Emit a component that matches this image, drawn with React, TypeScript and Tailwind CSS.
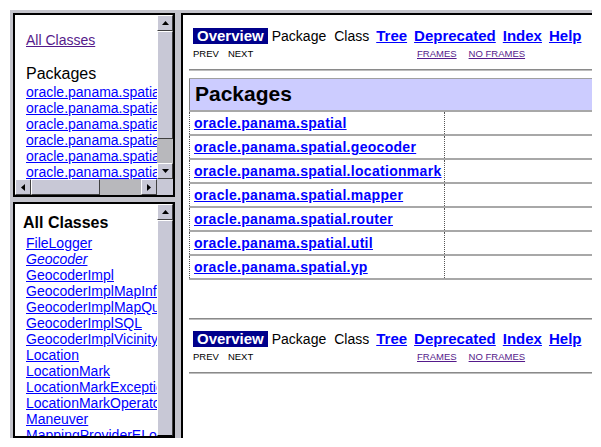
import React from "react";

const packages = [
  "oracle.panama.spatial",
  "oracle.panama.spatial.geocoder",
  "oracle.panama.spatial.locationmark",
  "oracle.panama.spatial.mapper",
  "oracle.panama.spatial.router",
  "oracle.panama.spatial.util",
  "oracle.panama.spatial.yp",
];

const classes: { name: string; italic?: boolean }[] = [
  { name: "FileLogger" },
  { name: "Geocoder", italic: true },
  { name: "GeocoderImpl" },
  { name: "GeocoderImplMapInfo" },
  { name: "GeocoderImplMapQuest" },
  { name: "GeocoderImplSQL" },
  { name: "GeocoderImplVicinity" },
  { name: "Location" },
  { name: "LocationMark" },
  { name: "LocationMarkException" },
  { name: "LocationMarkOperator" },
  { name: "Maneuver" },
  { name: "MappingProviderELoader" },
];

const btn =
  "flex items-center justify-center bg-[#c8c8d6] border border-t-white border-l-white border-r-[#404040] border-b-[#404040] shrink-0";

const Arrow = ({ dir }: { dir: "up" | "down" | "left" | "right" }) => {
  const pts = {
    up: "3.5,0 7,4 0,4",
    down: "0,0 7,0 3.5,4",
    left: "4,0 4,7 0,3.5",
    right: "0,0 4,3.5 0,7",
  }[dir];
  const vertical = dir === "up" || dir === "down";
  return (
    <svg
      width={vertical ? 7 : 4}
      height={vertical ? 4 : 7}
      viewBox={vertical ? "0 0 7 4" : "0 0 4 7"}
    >
      <polygon points={pts} fill="#000" />
    </svg>
  );
};

const NavBar = ({ top }: { top: boolean }) => (
  <div>
    <div
      className={`flex items-center pl-[10px] h-[16px] text-[14px] leading-[16px] ${
        top ? "mt-[13px]" : "mt-[11px]"
      }`}
    >
      <span className="bg-[#00008b] text-white font-bold text-[15px] px-[4px] h-[16px]">
        Overview
      </span>
      <span className="ml-[4px] text-black">Package</span>
      <span className="ml-[8px] text-black">Class</span>
      <a className="ml-[7px] font-bold text-[15px] text-[#0000ff] underline">Tree</a>
      <a className="ml-[7px] font-bold text-[15px] text-[#0000ff] underline">Deprecated</a>
      <a className="ml-[7px] font-bold text-[15px] text-[#0000ff] underline">Index</a>
      <a className="ml-[7px] font-bold text-[15px] text-[#0000ff] underline">Help</a>
    </div>
    <div className="flex pl-[10px] mt-[4px] text-[9.5px] leading-[12px]">
      <div className="w-[224px] flex text-black">
        <span>PREV</span>
        <span className="ml-[9px]">NEXT</span>
      </div>
      <a className="text-[#551a8b] underline">FRAMES</a>
      <a className="ml-[12px] text-[#551a8b] underline">NO FRAMES</a>
    </div>
  </div>
);

const Rule = ({ className }: { className: string }) => (
  <div className={`ml-[6px] border-t border-[#8a8a8a] border-b border-b-[#bdbdbd] ${className}`} />
);

export default function App() {
  return (
    <div className="w-[601px] h-[447px] bg-white overflow-hidden font-['Liberation_Sans',Arial,sans-serif]">
      <div className="ml-[10px] mt-[10px] w-[582px] h-[428px] bg-[#c4c4cc] overflow-hidden flex pt-[3px] pl-[3px]">
        {/* left column */}
        <div className="w-[162px] flex flex-col shrink-0">
          {/* package list frame */}
          <div className="h-[184px] border-2 border-black bg-white flex flex-col shrink-0">
            <div className="flex h-[164px]">
              <div className="w-[142px] overflow-hidden pt-[17px] pl-[11px] text-[14px] leading-[16px] whitespace-nowrap">
                <a className="text-[#551a8b] underline">All Classes</a>
                <div className="mt-[16px] text-[16px] leading-[20px] text-black">Packages</div>
                {packages.map((p) => (
                  <div key={p}>
                    <a className="text-[#0000ff] underline">{p}</a>
                  </div>
                ))}
              </div>
              <div className="w-[16px] flex flex-col">
                <div className={`${btn} h-[16px]`}>
                  <Arrow dir="up" />
                </div>
                <div className="h-[108px] bg-[#c8c8d6] border border-t-white border-l-white border-r-[#404040] border-b-[#404040]" />
                <div className="flex-1 bg-[#b8b8bc]" />
                <div className={`${btn} h-[16px]`}>
                  <Arrow dir="down" />
                </div>
              </div>
            </div>
            <div className="flex h-[16px]">
              <div className={`${btn} w-[16px]`}>
                <Arrow dir="left" />
              </div>
              <div className="w-[69px] bg-[#c8c8d6] border border-t-white border-l-white border-r-[#404040] border-b-[#404040]" />
              <div className="w-[41px] bg-[#b8b8bc]" />
              <div className={`${btn} w-[16px]`}>
                <Arrow dir="right" />
              </div>
              <div className="w-[16px] bg-[#c8c8d6]" />
            </div>
          </div>

          <div className="h-[5px] shrink-0" />

          {/* class list frame */}
          <div className="flex-1 border-2 border-black bg-white flex min-h-0">
            <div className="w-[142px] overflow-hidden pt-[10px] whitespace-nowrap">
              <div className="pl-[8px] text-[16px] leading-[18px] font-bold text-black">
                All Classes
              </div>
              <div className="pl-[11px] mt-[3px] text-[14px] leading-[16px]">
                {classes.map((c) => (
                  <div key={c.name}>
                    <a className={`text-[#0000ff] underline ${c.italic ? "italic" : ""}`}>
                      {c.name}
                    </a>
                  </div>
                ))}
              </div>
            </div>
            <div className="w-[16px] flex flex-col">
              <div className={`${btn} h-[16px]`}>
                <Arrow dir="up" />
              </div>
              <div className="flex-1 bg-[#c8c8d6] border border-t-white border-l-white border-r-[#404040]" />
            </div>
          </div>
        </div>

        <div className="w-[6px] shrink-0" />

        {/* main frame */}
        <div className="flex-1 border-l-2 border-t-2 border-black bg-white overflow-hidden">
          <div className="w-[520px]">
            <NavBar top />
            <Rule className="mt-[9px]" />

            <div className="ml-[6px] mt-[7px] border-t border-[#a0a0a0]">
              <div className="bg-[#ccccff] h-[31px] pl-[5px] pt-[3px] text-[21px] leading-[24px] font-bold text-black border-l border-[#808080]">
                Packages
              </div>
              {packages.map((p) => (
                <div key={p} className="flex h-[24px] border-t-2 border-[#a8a8a8]">
                  <div className="w-[256px] border-l border-r border-dotted border-[#555] pl-[4px] pt-[3px] text-[14px] leading-[16px] whitespace-nowrap">
                    <a className="text-[#0000ff] font-bold underline tracking-[0.3px]">{p}</a>
                  </div>
                  <div className="flex-1" />
                </div>
              ))}
              <div className="h-[2px] bg-[#a8a8a8]" />
            </div>

            <Rule className="mt-[38px]" />
            <NavBar top={false} />
            <Rule className="mt-[9px]" />
          </div>
        </div>
      </div>
    </div>
  );
}
